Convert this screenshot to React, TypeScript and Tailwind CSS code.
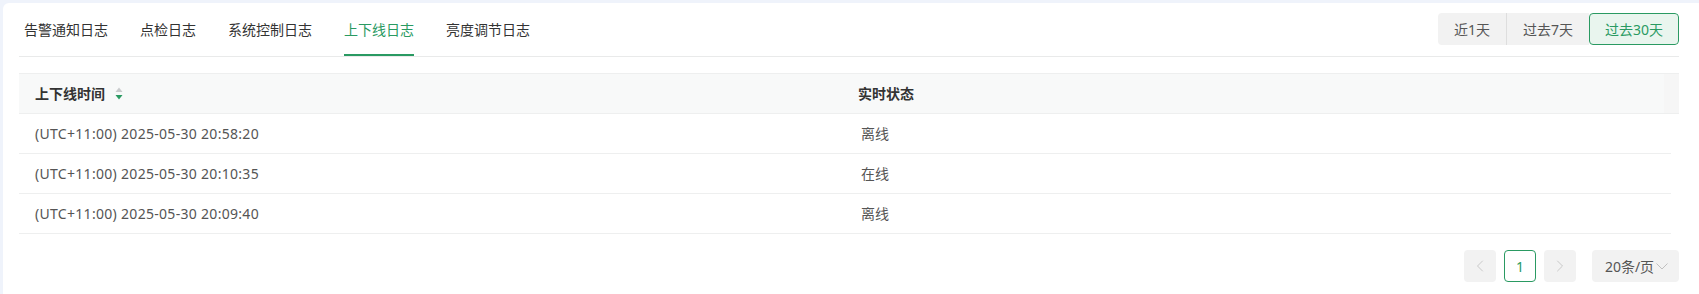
import { ChevronLeft, ChevronRight } from "lucide-react";

const tabs = ["告警通知日志", "点检日志", "系统控制日志", "上下线日志", "亮度调节日志"];
const ranges = ["近1天", "过去7天", "过去30天"];

const rows = [
  { time: "(UTC+11:00) 2025-05-30 20:58:20", status: "离线" },
  { time: "(UTC+11:00) 2025-05-30 20:10:35", status: "在线" },
  { time: "(UTC+11:00) 2025-05-30 20:09:40", status: "离线" },
];

function SortIcon() {
  return (
    <svg width="8" height="13" viewBox="0 0 8 13" className="ml-[10px]">
      <path d="M4 0.5 L7.5 5 H0.5 Z" fill="#c8cacc" />
      <path d="M4 12.5 L7.5 8 H0.5 Z" fill="#2a9a62" />
    </svg>
  );
}

export default function App() {
  return (
    <div
      className="h-[294px] overflow-hidden bg-[#eff3fb] pl-[3px] pt-[3px] text-[14px] text-[#333]"
      style={{ fontFamily: '"Noto Sans", "Noto Sans CJK SC", sans-serif' }}
    >
      <div className="h-[300px] rounded-tl-[6px] bg-white pl-[16px] pr-[20px]">
        {/* tabs + range switch */}
        <div className="flex h-[54px] items-stretch justify-between border-b border-[#e9eaea]">
          <div className="ml-[5px] flex gap-[32px]">
            {tabs.map((t) => (
              <div
                key={t}
                className={
                  t === "上下线日志"
                    ? "flex items-center border-b-2 border-[#2a9a62] pt-[1px] text-[#2a9a62]"
                    : "flex items-center border-b-2 border-transparent pt-[1px] text-[#333]"
                }
              >
                {t}
              </div>
            ))}
          </div>
          <div className="flex items-start pt-[10px]">
            <div className="flex h-[32px] overflow-hidden rounded-[4px]">
              <button className="h-full border-r border-[#dedede] bg-[#f2f2f2] px-[16px] text-[#555]">
                {ranges[0]}
              </button>
              <button className="h-full bg-[#f2f2f2] px-[16px] text-[#555]">{ranges[1]}</button>
              <button className="h-full rounded-[4px] border border-[#2a9a62] bg-[#e9f5ee] px-[15px] text-[#2a9a62]">
                {ranges[2]}
              </button>
            </div>
          </div>
        </div>

        {/* table */}
        <div className="mt-[16px]">
          <div className="flex h-[41px] border-y border-[#eeefef] bg-[#f8f9f9] font-bold text-[#333]">
            <div className="flex w-[823px] items-center pl-[16px]">
              上下线时间
              <SortIcon />
            </div>
            <div className="flex flex-1 items-center pl-[16px]">实时状态</div>
            <div className="w-[15px] bg-[#f6f6f6]" />
          </div>
          {rows.map((r, i) => (
            <div key={i} className="mr-[8px] flex h-[40px] border-b border-[#eeefef] text-[#555]">
              <div className="flex w-[823px] items-center pl-[16px] tracking-[0.3px]">{r.time}</div>
              <div className="flex flex-1 items-center pl-[19px]">{r.status}</div>
            </div>
          ))}
        </div>

        {/* pagination */}
        <div className="mt-[16px] flex justify-end gap-[8px]">
          <button className="flex h-[32px] w-[32px] items-center justify-center rounded-[4px] bg-[#f2f2f2] text-[#c0c0c0]">
            <ChevronLeft size={20} strokeWidth={1} />
          </button>
          <button className="flex h-[32px] w-[32px] items-center justify-center rounded-[4px] border border-[#2a9a62] bg-white text-[#2a9a62]">
            1
          </button>
          <button className="flex h-[32px] w-[32px] items-center justify-center rounded-[4px] bg-[#f2f2f2] text-[#c0c0c0]">
            <ChevronRight size={20} strokeWidth={1} />
          </button>
          <button className="ml-[8px] flex h-[32px] w-[87px] items-center justify-center gap-[2px] rounded-[4px] bg-[#f2f2f2] pl-[2px] text-[#555]">
            20条/页
            <svg width="12" height="7" viewBox="0 0 12 7">
              <path d="M0.5 0.5 L6 6 L11.5 0.5" fill="none" stroke="#c0c0c0" strokeWidth="1" />
            </svg>
          </button>
        </div>
      </div>
    </div>
  );
}
